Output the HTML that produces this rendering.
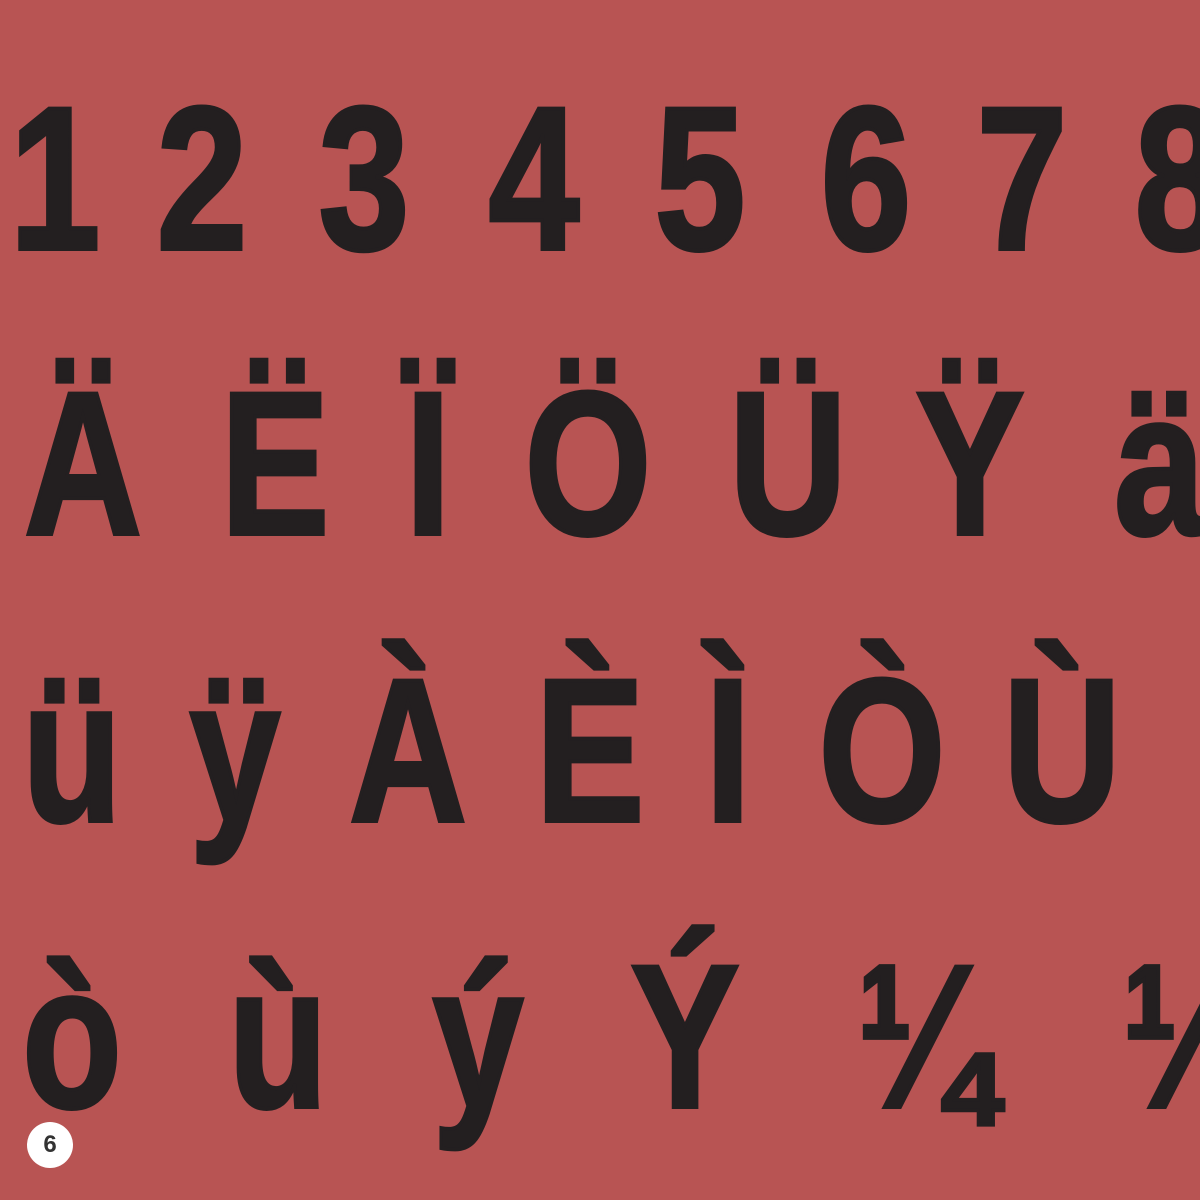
<!DOCTYPE html>
<html><head><meta charset="utf-8"><style>
html,body{margin:0;padding:0;overflow:hidden}
body{width:1200px;height:1200px;background:#b85453;position:relative;overflow:hidden;font-family:"Liberation Sans","DejaVu Sans",sans-serif;font-weight:bold;color:#231f20}
#w{position:absolute;left:0;top:0;width:1200px;height:1200px;overflow:hidden}
.g{position:absolute;font-size:204px;line-height:1;transform:translateX(-50%) scaleX(0.8);white-space:nowrap;-webkit-text-stroke:4px #231f20}
.c{position:absolute;left:27px;top:1122px;width:46px;height:46px;border-radius:50%;background:#fff;color:#333;font-size:24px;text-align:center;line-height:46px}
</style></head><body><div id="w">
<div class="g" style="left:55px;top:77px">1</div>
<div class="g" style="left:202px;top:77px">2</div>
<div class="g" style="left:364px;top:77px">3</div>
<div class="g" style="left:534px;top:77px">4</div>
<div class="g" style="left:700px;top:77px">5</div>
<div class="g" style="left:866px;top:77px">6</div>
<div class="g" style="left:1022px;top:77px">7</div>
<div class="g" style="left:1180px;top:77px">8</div>

<div class="g" style="left:83px;top:362px">Ä</div>
<div class="g" style="left:275px;top:362px">Ë</div>
<div class="g" style="left:428px;top:362px">Ï</div>
<div class="g" style="left:588px;top:362px">Ö</div>
<div class="g" style="left:788px;top:362px">Ü</div>
<div class="g" style="left:970px;top:362px">Ÿ</div>
<div class="g" style="left:1160px;top:362px">ä</div>

<div class="g" style="left:72px;top:649px">ü</div>
<div class="g" style="left:235px;top:649px">ÿ</div>
<div class="g" style="left:408px;top:649px">À</div>
<div class="g" style="left:590px;top:649px">È</div>
<div class="g" style="left:728px;top:649px">Ì</div>
<div class="g" style="left:882px;top:649px">Ò</div>
<div class="g" style="left:1062px;top:649px">Ù</div>

<div class="g" style="left:72px;top:935px">ò</div>
<div class="g" style="left:278px;top:935px">ù</div>
<div class="g" style="left:478px;top:935px">ý</div>
<div class="g" style="left:685px;top:935px">Ý</div>
<div class="g" style="left:925px;top:935px">¼</div>
<div class="g" style="left:1190px;top:935px">¼</div>

<div class="c">6</div>
</div></body></html>
